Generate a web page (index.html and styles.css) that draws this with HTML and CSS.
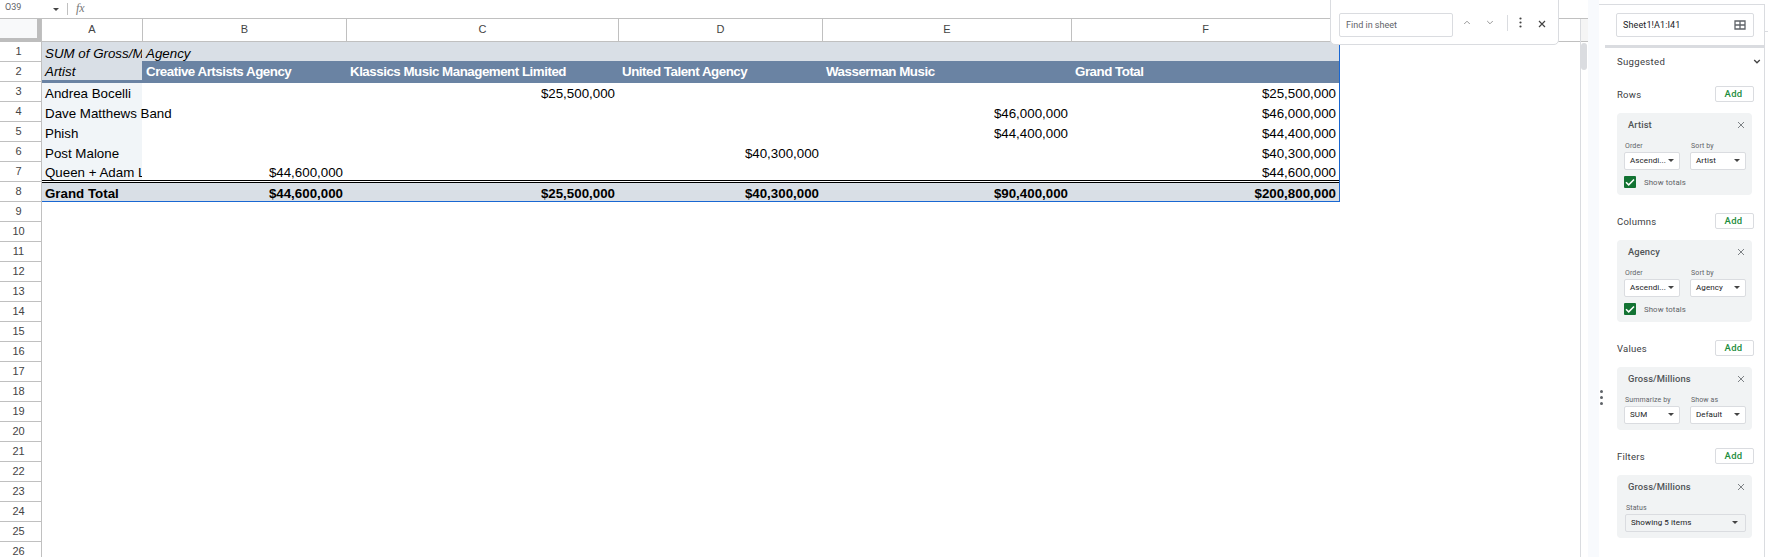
FILE: index.html
```
<!DOCTYPE html>
<html lang="en">
<head>
<meta charset="utf-8">
<title>Pivot table</title>
<link rel="stylesheet" href="styles.css">
</head>
<body>
<svg class="defs" width="0" height="0">
  <symbol id="close" viewBox="0 0 8 8"><path d="M1 1l6 6M7 1L1 7"/></symbol>
  <symbol id="check" viewBox="0 0 12 12"><path d="M2 6.2l2.7 2.7L10 3.5"/></symbol>
  <symbol id="up" viewBox="0 0 8 5"><path d="M1.2 4L4 1.2 6.8 4"/></symbol>
  <symbol id="down" viewBox="0 0 8 5"><path d="M1.2 1L4 3.8 6.8 1"/></symbol>
</svg>
<div class="app">
  <main class="sheet">
    <div class="formula-bar">
      <span class="name-box">O39</span><i class="caret name-caret"></i><i class="bar-sep"></i><span class="fx">fx</span>
    </div>
    <div class="sheet-body">
      <div class="row-heads">
        <div class="corner"></div>
        <div>1</div><div>2</div><div>3</div><div>4</div><div>5</div><div>6</div><div>7</div><div>8</div><div>9</div><div>10</div><div>11</div><div>12</div><div>13</div><div>14</div><div>15</div><div>16</div><div>17</div><div>18</div><div>19</div><div>20</div><div>21</div><div>22</div><div>23</div><div>24</div><div>25</div><div>26</div>
      </div>
      <div class="grid-area">
        <div class="cols col-heads"><div>A</div><div>B</div><div>C</div><div>D</div><div>E</div><div>F</div></div>
        <div class="pivot">
          <div class="cols r1"><div class="clip">SUM of Gross/Millions</div><div>Agency</div></div>
          <div class="cols r2"><div class="corner-label">Artist</div><div>Creative Artsists Agency</div><div>Klassics Music Management Limited</div><div>United Talent Agency</div><div>Wasserman Music</div><div>Grand Total</div></div>
          <div class="cols data first"><div>Andrea Bocelli</div><div></div><div>$25,500,000</div><div></div><div></div><div>$25,500,000</div></div>
          <div class="cols data"><div>Dave Matthews Band</div><div></div><div></div><div></div><div>$46,000,000</div><div>$46,000,000</div></div>
          <div class="cols data"><div>Phish</div><div></div><div></div><div></div><div>$44,400,000</div><div>$44,400,000</div></div>
          <div class="cols data"><div>Post Malone</div><div></div><div></div><div>$40,300,000</div><div></div><div>$40,300,000</div></div>
          <div class="cols data last"><div class="clip">Queen + Adam Lambert</div><div>$44,600,000</div><div></div><div></div><div></div><div>$44,600,000</div></div>
          <div class="cols data total"><div>Grand Total</div><div>$44,600,000</div><div>$25,500,000</div><div>$40,300,000</div><div>$90,400,000</div><div>$200,800,000</div></div>
        </div>
      </div>
      <div class="scroll"><div class="scroll-head"></div><div class="thumb"></div></div>
    </div>
    <div class="find">
      <div class="find-input">Find in sheet</div>
      <svg class="ic up"><use href="#up"/></svg>
      <svg class="ic down"><use href="#down"/></svg>
      <i class="find-sep"></i>
      <svg class="dots" viewBox="0 0 3 11"><circle cx="1.5" cy="1.5" r="1.1"/><circle cx="1.5" cy="5.5" r="1.1"/><circle cx="1.5" cy="9.5" r="1.1"/></svg>
      <svg class="find-close"><use href="#close"/></svg>
    </div>
  </main>
  <div class="gutter"></div>
  <aside class="panel">
    <div class="handle"><i></i><i></i><i></i></div>
    <div class="editor">
      <div class="range"><span>Sheet1!A1:I41</span>
        <svg class="table-ic" viewBox="0 0 12 10"><path d="M1 1h10v8H1zM1 5h10M6 1v8"/></svg>
      </div>
      <div class="rule"></div>
      <div class="suggested"><span>Suggested</span><svg class="chev"><use href="#down"/></svg></div>
      <div class="section"><span>Rows</span><b>Add</b></div>
      <div class="card tall">
        <div class="title"><span>Artist</span><svg><use href="#close"/></svg></div>
        <div class="fields">
          <div class="field"><label>Order</label><div class="select"><span>Ascendi...</span><i class="caret"></i></div></div>
          <div class="field"><label>Sort by</label><div class="select"><span>Artist</span><i class="caret"></i></div></div>
        </div>
        <div class="totals"><svg><use href="#check"/></svg><span>Show totals</span></div>
      </div>
      <div class="section"><span>Columns</span><b>Add</b></div>
      <div class="card tall">
        <div class="title"><span>Agency</span><svg><use href="#close"/></svg></div>
        <div class="fields">
          <div class="field"><label>Order</label><div class="select"><span>Ascendi...</span><i class="caret"></i></div></div>
          <div class="field"><label>Sort by</label><div class="select"><span>Agency</span><i class="caret"></i></div></div>
        </div>
        <div class="totals"><svg><use href="#check"/></svg><span>Show totals</span></div>
      </div>
      <div class="section"><span>Values</span><b>Add</b></div>
      <div class="card">
        <div class="title"><span>Gross/Millions</span><svg><use href="#close"/></svg></div>
        <div class="fields">
          <div class="field"><label>Summarize by</label><div class="select"><span>SUM</span><i class="caret"></i></div></div>
          <div class="field"><label>Show as</label><div class="select"><span>Default</span><i class="caret"></i></div></div>
        </div>
      </div>
      <div class="section"><span>Filters</span><b>Add</b></div>
      <div class="card">
        <div class="title"><span>Gross/Millions</span><svg><use href="#close"/></svg></div>
        <div class="fields">
          <div class="field wide"><label>Status</label><div class="select"><span>Showing 5 items</span><i class="caret"></i></div></div>
        </div>
      </div>
    </div>
    <div class="edge"><i></i></div>
  </aside>
</div>
</body>
</html>
```
FILE: styles.css
```
* { box-sizing: border-box; }
html, body { margin: 0; height: 557px; overflow: hidden; background: #fff; }
body { font-family: Roboto, sans-serif; color: #3c4043; }
.defs { position: absolute; }
.app { display: flex; width: 1768px; height: 557px; overflow: hidden; }
.sheet { position: relative; width: 1588px; height: 557px; overflow: hidden; font-family: "Liberation Sans", Arial, sans-serif; }

.caret { width: 0; height: 0; border: 3px solid transparent; border-top: 3px solid #444; border-bottom: 0; flex: none; }
.formula-bar { display: flex; height: 19px; border-bottom: 1px solid #c0c0c0; padding-left: 5px; }
.name-box { width: 48px; font: 9px/15px Roboto, sans-serif; color: #5f6368; }
.name-caret { margin-top: 8px; }
.bar-sep { width: 1px; height: 12px; margin: 3px 0 0 8px; background: #c0c0c0; }
.fx { margin-left: 8px; font: italic 12px/16px "Liberation Serif", serif; color: #777; }

.sheet-body { display: flex; }
.row-heads { width: 42px; border-right: 1px solid #c0c0c0; font-size: 11px; color: #444; }
.row-heads div { height: 20px; line-height: 19px; padding-right: 4px; text-align: center; border-bottom: 1px solid #c0c0c0; }
.row-heads .corner { height: 23px; background: #f8f9fa; border-right: 4px solid #bdbdbd; border-bottom: 4px solid #bdbdbd; }
.grid-area { width: 1538px; }
.cols { display: grid; grid-template-columns: 101px 204px 272px 204px 249px 268px; }
.col-heads { height: 23px; border-bottom: 1px solid #c0c0c0; font-size: 11px; line-height: 21px; color: #444; text-align: center; }
.col-heads div { border-right: 1px solid #c0c0c0; }

.pivot { width: 1298px; border-right: 1px solid #1967d2; border-bottom: 1px solid #1967d2; font-size: 13.333px; color: #000; }
.pivot .cols > div { padding: 0 4px 0 3px; white-space: nowrap; min-width: 0; }
.pivot .clip { width: 100px; overflow: hidden; padding-right: 0 !important; }
.r1 { height: 19px; background: #d9dfe6; font-style: italic; line-height: 23px; }
.r1 > div { height: 19px; }
.r2 { height: 22px; background: #6a83a3; color: #fff; font-weight: bold; line-height: 21px; letter-spacing: -.48px; }
.r2 .corner-label { height: 19px; width: 100px; background: #d9dfe6; color: #000; font-style: italic; font-weight: normal; letter-spacing: 0; }
.data { height: 20px; line-height: 23px; text-align: right; }
.data > div { height: 20px; }
.data > div:first-child { width: 100px; text-align: left; background: #f1f5f8; }
.data.first { height: 19px; line-height: 21px; }
.data.first > div { height: 19px; }
.data.last { height: 21px; line-height: 21px; border-bottom: 3px double #000; }
.data.last > div { height: 18px; }
.data.total { height: 18px; line-height: 21px; background: #d9dfe6; font-weight: bold; }
.data.total > div { height: 18px; }
.data.total > div:first-child { background: none; }

.scroll { width: 8px; height: 538px; border-left: 1px solid #dadce0; }
.scroll-head { height: 23px; background: #f5f5f5; border-bottom: 1px solid #c0c0c0; }
.thumb { width: 6px; height: 27px; margin-top: 1px; border-radius: 3px; background: #dadce0; }

.find { position: absolute; left: 1330px; top: -1px; width: 229px; height: 46px; display: flex; align-items: flex-start; background: #fff; border: 1px solid #dadce0; border-radius: 0 0 5px 5px; padding: 13px 0 0 8px; }
.find-input { width: 114px; height: 24px; border: 1px solid #dadce0; border-radius: 2px; padding-left: 6px; font: 9px/22px Roboto, sans-serif; color: #5f6368; }
svg { fill: none; stroke: #5f6368; stroke-width: 1; flex: none; }
.ic { width: 8px; height: 5px; stroke: #999; }
.up { margin: 7px 0 0 10px; }
.down { margin: 7px 0 0 15px; }
.find-sep { width: 1px; height: 16px; margin: 2px 0 0 13px; background: #dadce0; }
.dots { width: 3px; height: 11px; margin: 4px 0 0 11px; fill: #444; stroke: none; }
.find-close { width: 8px; height: 8px; margin: 7px 0 0 16px; stroke: #444; stroke-width: 1.2; }

.gutter { width: 11px; background: #f8fafd; }
.panel { width: 169px; display: flex; padding-top: 4px; }
.handle { width: 6px; border-top: 1px solid #dadce0; padding: 385px 0 0 1px; }
.handle i { display: block; width: 3px; height: 3px; margin-bottom: 3px; border-radius: 50%; background: #5f6368; }
.editor { width: 160px; border-top: 1px solid #dadce0; border-right: 1px solid #dadce0; padding-top: 8px; }
.range { display: flex; justify-content: space-between; align-items: center; width: 138px; height: 24px; margin-left: 11px; border: 1px solid #dadce0; border-radius: 2px; padding: 0 7px 0 6px; font-size: 9px; letter-spacing: .12px; color: #202124; }
.table-ic { width: 12px; height: 10px; stroke-width: 1.3; }
.rule { height: 3px; margin-top: 8px; background: #dadce0; }
.suggested { display: flex; justify-content: space-between; align-items: center; height: 28px; padding: 0 3px 2px 12px; font-size: 9.6px; letter-spacing: .3px; }
.chev { width: 8px; height: 5px; stroke: #444; stroke-width: 1.3; }
.section { display: flex; justify-content: space-between; align-items: center; width: 137px; height: 16px; margin: 18px 0 11px 12px; font-size: 9.5px; letter-spacing: .25px; }
.section span { padding-top: 1px; }
.suggested + .section { margin-top: 10px; }
.section b { width: 39px; height: 16px; border: 1px solid #dadce0; border-radius: 2px; padding-right: 2px; text-align: center; font-size: 9.5px; line-height: 14px; font-weight: 500; color: #1e8e3e; }
.card { width: 135px; height: 63px; margin-left: 12px; border-radius: 4px; background: #f1f3f4; padding: 0 6px 0 7px; }
.tall { height: 82px; }
.title { display: flex; justify-content: space-between; align-items: center; height: 24px; padding: 0 1px 1px 4px; font-size: 9.4px; letter-spacing: .1px; font-weight: 500; color: #505357; }
.title svg { width: 8px; height: 8px; stroke-width: .8; }
.fields { display: flex; justify-content: space-between; height: 33px; }
.field { width: 56px; }
.field label { display: block; height: 15px; padding: 3px 0 0 1px; font-size: 7px; letter-spacing: .12px; line-height: 13px; white-space: nowrap; color: #5f6368; }
.select { display: flex; align-items: center; justify-content: space-between; height: 18px; padding: 0 5px 1px; border: 1px solid #dadce0; border-radius: 2px; background: #fff; font-size: 8px; letter-spacing: .1px; color: #202124; white-space: nowrap; }
.wide { width: 122px; margin-left: 1px; }
.wide .select { background: none; padding-right: 7px; }
.totals { display: flex; align-items: center; gap: 8px; margin-top: 6px; font-size: 7.8px; letter-spacing: .1px; color: #5f6368; }
.totals svg { width: 12px; height: 12px; border-radius: 1px; background: #137333; stroke: #fff; stroke-width: 1.5; }
.edge { width: 3px; padding-top: 27px; }
.edge i { display: block; height: 1px; background: #dadce0; }
```
